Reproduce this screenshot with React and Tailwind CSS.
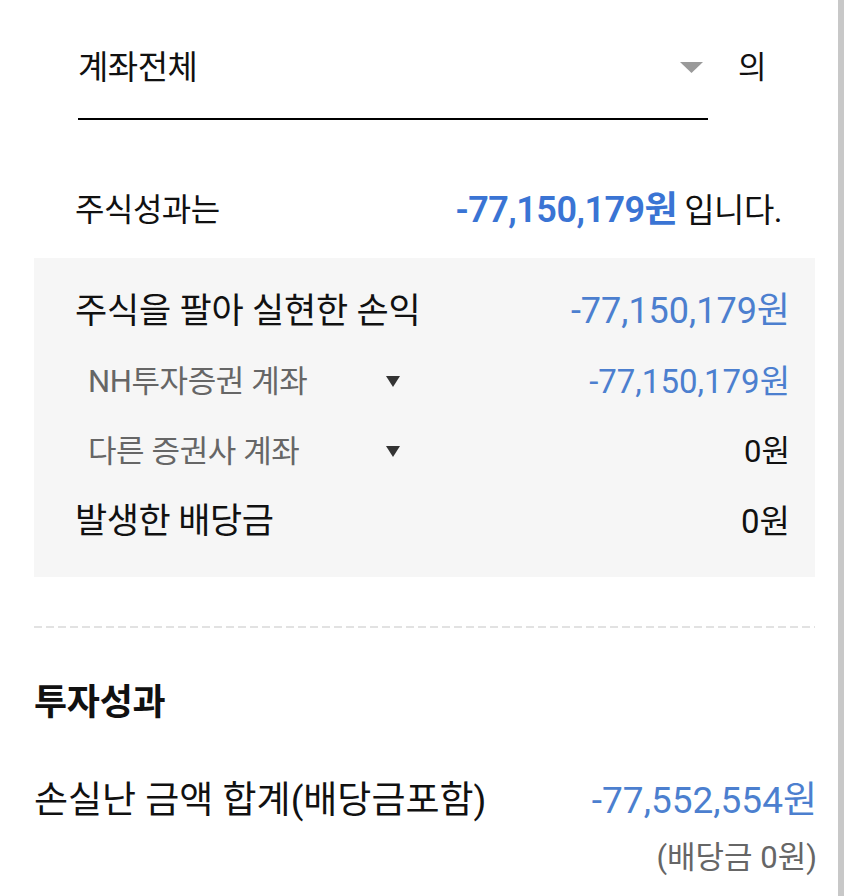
const FONT = { fontFamily: "Roboto, 'Noto Sans CJK KR', sans-serif" };

const Caret = ({ className }) => (
  <svg viewBox="0 0 14 11" preserveAspectRatio="none" className={className}>
    <path d="M0 0 H14 L7 11 Z" fill="currentColor" />
  </svg>
);

const SubRow = ({ label, value, valueClass }) => (
  <div className="h-[70px] flex items-center pl-[54px] pr-[25px]">
    <div className="w-[298px] text-[31px] text-[#666] leading-none tracking-[-0.4px]">{label}</div>
    <Caret className="w-[14px] h-[11px] text-[#333]" />
    <div className={`ml-auto leading-none ${valueClass}`}>{value}</div>
  </div>
);

export default function App() {
  return (
    <div className="w-[850px] h-[896px] bg-white flex overflow-hidden text-[#111]" style={FONT}>
      <div className="w-[838px] shrink-0">
        {/* 계좌 선택 */}
        <div className="flex items-start pl-[78px] pt-[46px]">
          <div className="w-[630px] h-[74px] border-b-2 border-black">
            <div className="h-[42px] flex items-center justify-between pr-[5px]">
              <span className="text-[33px] leading-none tracking-[-0.5px]">계좌전체</span>
              <Caret className="w-[23px] h-[11px] text-[#9a9a9a]" />
            </div>
          </div>
          <div className="h-[42px] flex items-center ml-[30px] text-[31px] leading-none">의</div>
        </div>

        {/* 주식성과 */}
        <div className="mt-[60px] h-[60px] w-[782px] pl-[75px] flex items-center justify-between">
          <span className="text-[32px] leading-none tracking-[-0.5px]">주식성과는</span>
          <span className="flex items-center leading-none">
            <span className="text-[36px] font-semibold text-[#3a74d4] tracking-[-0.5px]">-77,150,179원</span>
            <span className="text-[33px] ml-[7px] tracking-[-0.5px]">입니다.</span>
          </span>
        </div>

        <div className="mt-[18px] mx-[34px] w-[781px] h-[319px] bg-[#f6f6f6] pt-[18px]">
          <div className="h-[70px] flex items-center justify-between pl-[41px] pr-[25px]">
            <span className="text-[35px] leading-none tracking-[-0.2px]">주식을 팔아 실현한 손익</span>
            <span className="text-[36px] leading-none text-[#4c7fcf]">-77,150,179원</span>
          </div>
          <SubRow label="NH투자증권 계좌" value="-77,150,179원" valueClass="text-[33px] text-[#4c7fcf]" />
          <SubRow label="다른 증권사 계좌" value="0원" valueClass="text-[31px] text-[#111]" />
          <div className="h-[70px] flex items-center justify-between pl-[41px] pr-[25px]">
            <span className="text-[35px] leading-none tracking-[-0.5px]">발생한 배당금</span>
            <span className="text-[33px] leading-none">0원</span>
          </div>
        </div>

        <div className="mt-[49px] mx-[34px] w-[781px] h-[2px] bg-[linear-gradient(to_right,#e2e2e2_8px,transparent_8px)] bg-[length:12px_2px]" />

        {/* 투자성과 */}
        <div className="mt-[45px] h-[60px] pl-[34px] flex items-center">
          <span className="text-[36px] font-bold leading-none tracking-[-0.3px]">투자성과</span>
        </div>
        <div className="mt-[37px] h-[60px] mx-[34px] w-[783px] flex items-center justify-between">
          <span className="text-[37px] leading-none">손실난 금액 합계(배당금포함)</span>
          <span className="text-[37px] leading-none text-[#4c7fcf]">-77,552,554원</span>
        </div>
        <div className="h-[54px] mx-[34px] w-[783px] flex items-center justify-end">
          <span className="text-[31px] leading-none text-[#666]">(배당금 0원)</span>
        </div>
      </div>
      <div className="w-[6px] h-full bg-[#c8c8c8] shrink-0" />
    </div>
  );
}
